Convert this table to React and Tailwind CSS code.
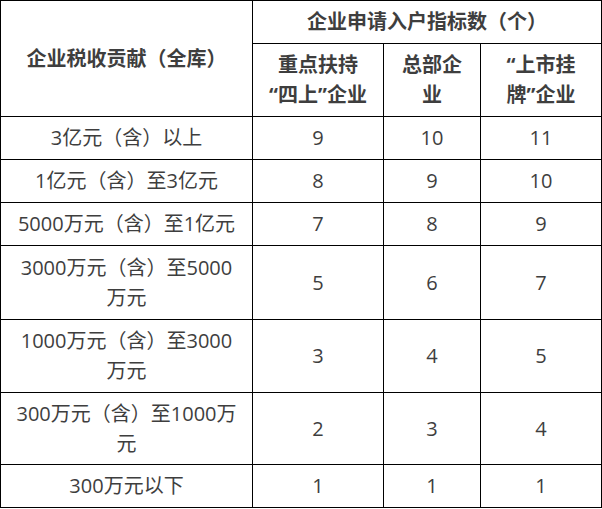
import React from 'react';

const rows = [
  { label: ['3亿元（含）以上'], vals: [9, 10, 11], h: 'h-[43px]' },
  { label: ['1亿元（含）至3亿元'], vals: [8, 9, 10], h: 'h-[43px]' },
  { label: ['5000万元（含）至1亿元'], vals: [7, 8, 9], h: 'h-[43px]' },
  { label: ['3000万元（含）至5000', '万元'], vals: [5, 6, 7], h: 'h-[74px]' },
  { label: ['1000万元（含）至3000', '万元'], vals: [3, 4, 5], h: 'h-[73px]' },
  { label: ['300万元（含）至1000万', '元'], vals: [2, 3, 4], h: 'h-[72px]' },
  { label: ['300万元以下'], vals: [1, 1, 1], h: 'h-[43px]' },
];

const cell = 'border border-black text-center align-middle p-0';

export default function App() {
  return (
    <div
      className="w-[602px] h-[509px] bg-white text-[#3e3e3e] text-[20px] leading-[30px]"
      style={{ fontFamily: '"Open Sans", "Noto Sans CJK SC", sans-serif' }}
    >
      <table className="w-[601px] table-fixed border-collapse">
        <colgroup>
          <col className="w-[252px]" />
          <col className="w-[131px]" />
          <col className="w-[97px]" />
          <col className="w-[121px]" />
        </colgroup>
        <thead>
          <tr className="h-[43px]">
            <th rowSpan={2} className={`${cell} font-bold`}>
              企业税收贡献（全库）
            </th>
            <th colSpan={3} className={`${cell} font-bold`}>
              企业申请入户指标数（个）
            </th>
          </tr>
          <tr className="h-[73px]">
            <th className={`${cell} font-bold`}>
              重点扶持
              <br />
              “四上”企业
            </th>
            <th className={`${cell} font-bold`}>
              总部企
              <br />业
            </th>
            <th className={`${cell} font-bold`}>
              “上市挂
              <br />
              牌”企业
            </th>
          </tr>
        </thead>
        <tbody>
          {rows.map((r, i) => (
            <tr key={i} className={r.h}>
              <td className={cell}>
                {r.label.map((l, j) => (
                  <div key={j}>{l}</div>
                ))}
              </td>
              {r.vals.map((v, j) => (
                <td key={j} className={cell}>
                  {v}
                </td>
              ))}
            </tr>
          ))}
        </tbody>
      </table>
    </div>
  );
}
